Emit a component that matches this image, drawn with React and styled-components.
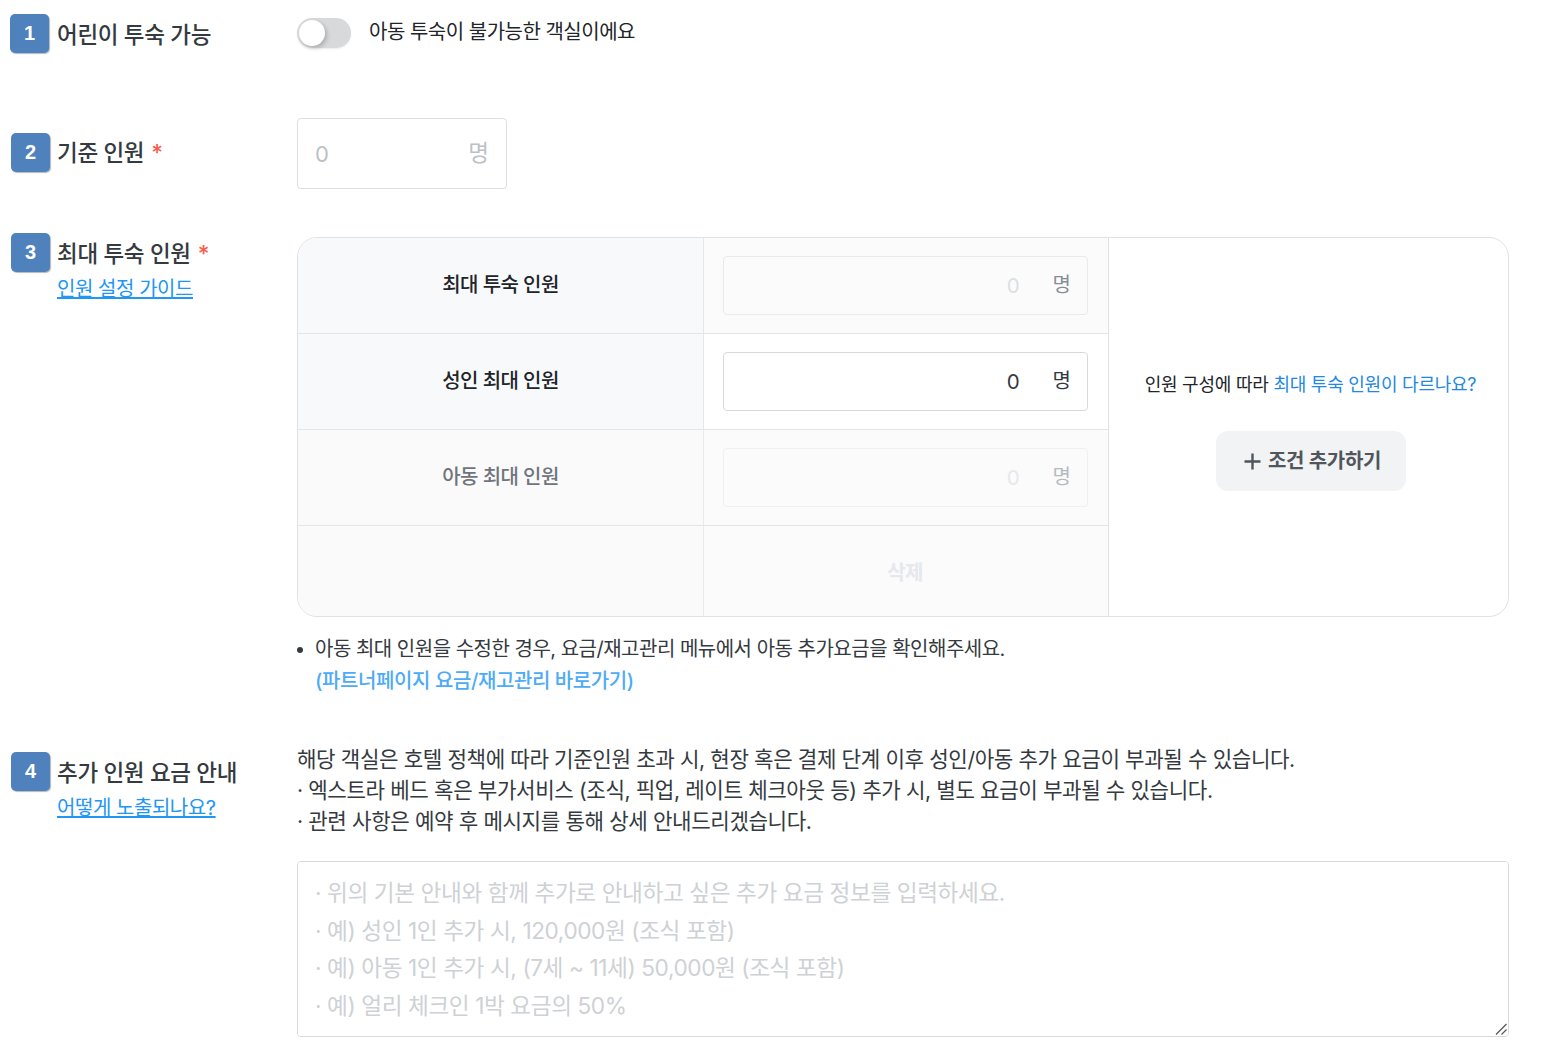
import React from 'react';
import styled, { createGlobalStyle } from 'styled-components';

const Global = createGlobalStyle`
  html, body { margin: 0; padding: 0; background: #fff; }
  body { font-family: Inter, "Noto Sans CJK KR", sans-serif; color: #212529; overflow: hidden; }
  * { box-sizing: border-box; }
`;

const Page = styled.div`
  width: 1555px;
  height: 1053px;
  padding: 14px 46px 0 0;
  display: flex;
  flex-direction: column;
`;
const Row = styled.section`
  display: grid;
  grid-template-columns: 297px 1212px;
  margin-top: ${p => p.$mt || 0}px;
`;
const LabelCol = styled.div`
  display: flex;
  gap: ${p => p.$gap ?? 7}px;
  padding-left: ${p => p.$pl ?? 11}px;
  margin-top: ${p => p.$top || 0}px;
`;
const Badge = styled.div`
  width: 39px;
  height: 39px;
  flex: none;
  border-radius: 5px;
  background: #4f81bd;
  color: #fff;
  font-family: "Liberation Sans", Arial, sans-serif;
  font-weight: 700;
  font-size: 20px;
  display: flex;
  align-items: center;
  justify-content: center;
  box-shadow: 1px 1px 1px #b4b8bd;
`;
const LabelText = styled.div`
  display: flex;
  flex-direction: column;
  padding-top: ${p => p.$pt ?? 4}px;
`;
const Title = styled.div`
  font-size: 22.5px;
  line-height: 32px;
  font-weight: 500;
  color: #343a40;
  letter-spacing: -0.32px;
  white-space: nowrap;
`;
const Star = styled.span`
  color: #fa5a4b;
  margin-left: 7px;
`;
const Guide = styled.a`
  font-size: 20px;
  line-height: 28px;
  margin-top: 5px;
  color: #2196f3;
  text-decoration: underline;
  letter-spacing: -0.45px;
  white-space: nowrap;
`;
const ToggleLine = styled.div`
  display: flex;
  align-items: center;
  gap: 18px;
  height: 34px;
  padding-top: 4px;
`;
const Toggle = styled.div`
  width: 54px;
  height: 30px;
  border-radius: 15px;
  background: #d7d9db;
  position: relative;
  box-shadow: 0 1px 2px rgba(0, 0, 0, .08);
`;
const Knob = styled.div`
  position: absolute;
  left: 2px;
  top: 2px;
  width: 26px;
  height: 26px;
  border-radius: 50%;
  background: #fff;
  box-shadow: 2px 2px 4px rgba(0, 0, 0, .2);
`;
const ToggleText = styled.span`
  font-size: 20px;
  color: #212529;
  letter-spacing: -0.5px;
  position: relative;
  top: -3px;
`;
const BaseInput = styled.div`
  width: 210px;
  height: 71px;
  border: 1px solid #dcdee1;
  border-radius: 4px;
  display: flex;
  justify-content: space-between;
  align-items: center;
  padding: 0 17px;
  font-size: 22px;
  color: #bcc1c7;
`;
const BaseUnit = styled.span`
  font-size: 22.5px;
  position: relative;
  top: -3px;
`;
const Panel = styled.div`
  border: 1px solid #dee2e6;
  border-radius: 20px;
  overflow: hidden;
  height: 380px;
  display: grid;
  grid-template-columns: 811px 1fr;
`;
const Table = styled.div`
  display: grid;
  grid-template-columns: 406px 404px;
  grid-template-rows: 96px 96px 96px 1fr;
  border-right: 1px solid #dee2e6;
`;
const HeadCell = styled.div`
  background: ${p => (p.$muted ? '#fafafb' : '#f8f9fa')};
  border-right: 1px solid ${p => (p.$muted ? '#e9ecef' : '#e5e7ea')};
  border-bottom: ${p => (p.$last ? 'none' : '1px solid #e3e5e8')};
  display: flex;
  align-items: center;
  justify-content: center;
  font-size: 20px;
  font-weight: 500;
  letter-spacing: -0.55px;
  color: ${p => (p.$muted ? '#70757b' : '#212529')};
  padding-bottom: 4px;
`;
const ValueCell = styled.div`
  background: ${p => (p.$white ? '#fff' : '#fbfbfc')};
  border-bottom: ${p => (p.$last ? 'none' : '1px solid #e3e5e8')};
  padding: 18px 20px 0 19px;
`;
const CountInput = styled.div`
  height: 59px;
  border: 1px solid ${p => (p.$active ? '#d7d9dc' : p.$faint ? '#eef0f2' : '#e8eaec')};
  border-radius: 4px;
  background: ${p => (p.$active ? '#fff' : 'transparent')};
  display: flex;
  justify-content: flex-end;
  align-items: center;
  padding-right: 16px;
  gap: 33px;
`;
const CountValue = styled.span`
  font-size: 20.5px;
  color: ${p => (p.$active ? '#343a40' : p.$faint ? '#e6e8eb' : '#dcdfe2')};
`;
const Unit = styled.span`
  font-size: 20px;
  color: ${p => (p.$active ? '#343a40' : p.$faint ? '#b5babf' : '#868e96')};
  position: relative;
  top: -2px;
`;
const DeleteCell = styled(ValueCell)`
  padding: 0 2px 0 0;
  display: flex;
  align-items: center;
  justify-content: center;
  font-size: 20px;
  font-weight: 700;
  color: #e6e8ec;
  letter-spacing: -0.6px;
`;
const Side = styled.div`
  display: flex;
  flex-direction: column;
  align-items: center;
  padding: 133px 0 0 4px;
`;
const SideText = styled.div`
  font-size: 18px;
  line-height: 28px;
  color: #212529;
  letter-spacing: -0.24px;
  white-space: nowrap;
`;
const Blue = styled.span`
  color: #2188e5;
`;
const AddButton = styled.button`
  margin-top: 32px;
  width: 190px;
  height: 60px;
  padding: 0 0 3px 4px;
  border: 0;
  border-radius: 12px;
  background: #f1f3f5;
  color: #50565c;
  font: 600 20px Inter, "Noto Sans CJK KR", sans-serif;
  letter-spacing: -0.35px;
  display: flex;
  align-items: center;
  justify-content: center;
  gap: 7px;
`;
const PlusIcon = styled.svg`
  position: relative;
  top: 2px;
`;
const Note = styled.ul`
  margin: 16px 0 0;
  padding: 0 0 0 18px;
  list-style: none;
  font-size: 20px;
  line-height: 32px;
  color: #343a40;
  letter-spacing: -0.5px;
`;
const NoteItem = styled.li`
  position: relative;
  &::before {
    content: '';
    position: absolute;
    left: -18px;
    top: 14px;
    width: 6px;
    height: 6px;
    border-radius: 50%;
    background: #343a40;
  }
`;
const NoteLink = styled.a`
  display: block;
  color: #4dabf7;
  font-weight: 500;
  letter-spacing: -0.4px;
`;
const Info = styled.div`
  font-size: 21.22px;
  line-height: 31px;
  color: #343a40;
  letter-spacing: -0.41px;
  white-space: nowrap;
`;
const MemoWrap = styled.div`
  position: relative;
  margin-top: 24px;
`;
const Memo = styled.textarea`
  display: block;
  width: 1212px;
  height: 176px;
  padding: 12px 17px;
  border: 1px solid #d7d9dc;
  border-radius: 4px;
  outline: none;
  resize: none;
  font: 400 22.65px/37.7px Inter, "Noto Sans CJK KR", sans-serif;
  letter-spacing: -0.42px;
  color: #343a40;
  &::placeholder { color: #ced1d5; opacity: 1; }
`;
const Grip = styled.svg`
  position: absolute;
  right: 2px;
  bottom: 2px;
`;

const memo = `· 위의 기본 안내와 함께 추가로 안내하고 싶은 추가 요금 정보를 입력하세요.
· 예) 성인 1인 추가 시, 120,000원 (조식 포함)
· 예) 아동 1인 추가 시, (7세 ~ 11세) 50,000원 (조식 포함)
· 예) 얼리 체크인 1박 요금의 50%`;

export default function App() {
  return (
    <Page>
      <Global />
      <Row>
        <LabelCol $pl={10} $gap={8}>
          <Badge>1</Badge>
          <LabelText $pt={5}><Title>어린이 투숙 가능</Title></LabelText>
        </LabelCol>
        <ToggleLine>
          <Toggle><Knob /></Toggle>
          <ToggleText>아동 투숙이 불가능한 객실이에요</ToggleText>
        </ToggleLine>
      </Row>
      <Row $mt={65}>
        <LabelCol $top={15}>
          <Badge>2</Badge>
          <LabelText $pt={4}><Title>기준 인원<Star>*</Star></Title></LabelText>
        </LabelCol>
        <BaseInput><span>0</span><BaseUnit>명</BaseUnit></BaseInput>
      </Row>
      <Row $mt={48}>
        <LabelCol $top={-4}>
          <Badge>3</Badge>
          <LabelText $pt={5}>
            <Title>최대 투숙 인원<Star>*</Star></Title>
            <Guide>인원 설정 가이드</Guide>
          </LabelText>
        </LabelCol>
        <div>
          <Panel>
            <Table>
              <HeadCell>최대 투숙 인원</HeadCell>
              <ValueCell>
                <CountInput><CountValue>0</CountValue><Unit>명</Unit></CountInput>
              </ValueCell>
              <HeadCell>성인 최대 인원</HeadCell>
              <ValueCell $white>
                <CountInput $active><CountValue $active>0</CountValue><Unit $active>명</Unit></CountInput>
              </ValueCell>
              <HeadCell $muted>아동 최대 인원</HeadCell>
              <ValueCell>
                <CountInput $faint><CountValue $faint>0</CountValue><Unit $faint>명</Unit></CountInput>
              </ValueCell>
              <HeadCell $muted $last />
              <DeleteCell $last>삭제</DeleteCell>
            </Table>
            <Side>
              <SideText>인원 구성에 따라 <Blue>최대 투숙 인원이 다르나요?</Blue></SideText>
              <AddButton>
                <PlusIcon width="17" height="17" viewBox="0 0 17 17" fill="none" stroke="#50565c" strokeWidth="2.4"><path d="M8.5 0.5v16M0.5 8.5h16" /></PlusIcon>
                조건 추가하기
              </AddButton>
            </Side>
          </Panel>
          <Note>
            <NoteItem>아동 최대 인원을 수정한 경우, 요금/재고관리 메뉴에서 아동 추가요금을 확인해주세요.
              <NoteLink>(파트너페이지 요금/재고관리 바로가기)</NoteLink>
            </NoteItem>
          </Note>
        </div>
      </Row>
      <Row $mt={47}>
        <LabelCol $top={8}>
          <Badge>4</Badge>
          <LabelText $pt={5}>
            <Title>추가 인원 요금 안내</Title>
            <Guide>어떻게 노출되나요?</Guide>
          </LabelText>
        </LabelCol>
        <div>
          <Info>
            해당 객실은 호텔 정책에 따라 기준인원 초과 시, 현장 혹은 결제 단계 이후 성인/아동 추가 요금이 부과될 수 있습니다.<br />
            · 엑스트라 베드 혹은 부가서비스 (조식, 픽업, 레이트 체크아웃 등) 추가 시, 별도 요금이 부과될 수 있습니다.<br />
            · 관련 사항은 예약 후 메시지를 통해 상세 안내드리겠습니다.
          </Info>
          <MemoWrap>
            <Memo placeholder={memo} />
            <Grip width="12" height="12" viewBox="0 0 12 12" fill="none" stroke="#555" strokeWidth="1.2">
              <path d="M1 11.5 11.5 1M6.5 11.5l5-5" />
            </Grip>
          </MemoWrap>
        </div>
      </Row>
    </Page>
  );
}
